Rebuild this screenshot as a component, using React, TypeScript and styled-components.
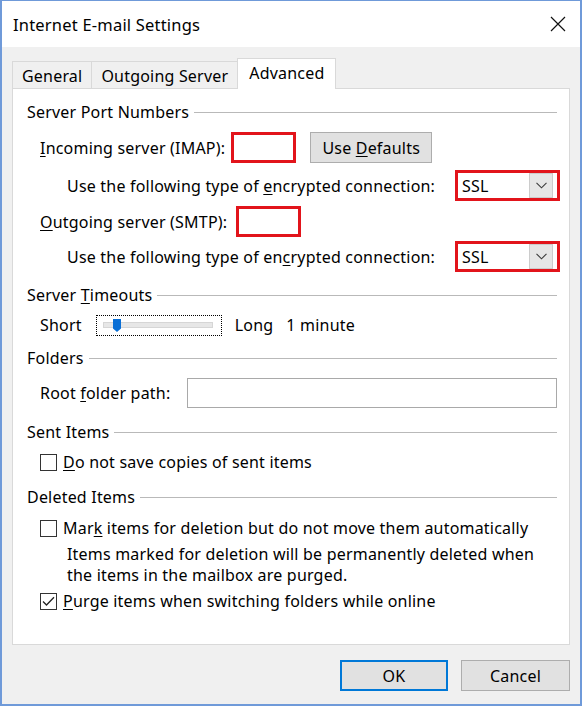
import React from "react";
import styled, { createGlobalStyle, css } from "styled-components";

const GlobalStyle = createGlobalStyle`
  html, body {
    margin: 0;
    padding: 0;
    background: #fff;
  }
  body {
    font-family: "Noto Sans", "Open Sans", sans-serif;
    font-size: 16px;
    letter-spacing: 0.2px;
    color: #000;
  }
  * {
    box-sizing: border-box;
  }
`;

const Window = styled.div`
  width: 582px;
  height: 706px;
  display: flex;
  flex-direction: column;
  border: 2px solid #6f9ad9;
  border-top-width: 1px;
  background: #f0f0f0;
`;

const TitleBar = styled.div`
  flex: none;
  height: 46px;
  display: flex;
  align-items: center;
  justify-content: space-between;
  padding: 0 14px 0 11px;
  background: #fff;
  font-size: 16.5px;
  letter-spacing: 0.2px;
`;

const CloseButton = styled.div`
  display: flex;
  align-items: center;
  justify-content: center;
  width: 16px;
  height: 16px;
`;

const Body = styled.div`
  flex: 1;
  display: flex;
  flex-direction: column;
  padding: 11px 10px 0;
`;

const TabList = styled.div`
  display: flex;
  align-items: flex-end;
  height: 31px;
`;

const Tab = styled.div<{ $active?: boolean }>`
  display: flex;
  align-items: center;
  height: 28px;
  padding: 0 9px;
  margin-right: -1px;
  border: 1px solid #d9d9d9;
  border-bottom: none;
  background: #f0f0f0;
  ${(p) =>
    p.$active &&
    css`
      position: relative;
      z-index: 2;
      height: 31px;
      padding: 0 11px 3px;
      background: #fff;
    `}
`;

const Panel = styled.div`
  position: relative;
  z-index: 1;
  height: 557px;
  margin-top: -1px;
  display: flex;
  flex-direction: column;
  padding: 13px 12px 0 14px;
  background: #fff;
  border: 1px solid #d9d9d9;
`;

const GroupHeader = styled.div<{ $mt?: number }>`
  display: flex;
  align-items: center;
  gap: 5px;
  height: 20px;
  margin-top: ${(p) => p.$mt ?? 0}px;

  &::after {
    content: "";
    flex: 1;
    height: 1px;
    background: #b9b9b9;
  }
`;

const Row = styled.div<{ $indent: number; $mt: number; $h: number }>`
  display: flex;
  align-items: center;
  height: ${(p) => p.$h}px;
  margin-top: ${(p) => p.$mt}px;
  padding-left: ${(p) => p.$indent}px;
  white-space: nowrap;
`;

const Key = styled.span`
  text-decoration: underline;
  text-decoration-thickness: 1px;
  text-underline-offset: 2px;
`;

const RedFrame = styled.div<{ $w: number; $ml?: number }>`
  display: flex;
  align-items: stretch;
  width: ${(p) => p.$w}px;
  height: 31px;
  margin-left: ${(p) => p.$ml ?? 0}px;
  border: 3px solid #e2141b;
  background: #fff;
`;

const ComboFrame = styled(RedFrame)`
  margin-left: auto;
  margin-right: -3px;
`;

const ComboValue = styled.div`
  flex: 1;
  display: flex;
  align-items: center;
  padding-left: 4px;
`;

const ComboArrow = styled.div`
  width: 24px;
  margin-right: 4px;
  display: flex;
  align-items: center;
  justify-content: center;
  background: #e6e6e6;
  border: 1px solid #cccccc;
`;

const Button = styled.button<{ $w: number; $default?: boolean }>`
  width: ${(p) => p.$w}px;
  height: 31px;
  padding: 0;
  font: inherit;
  letter-spacing: inherit;
  color: #000;
  background: #e1e1e1;
  border: 1px solid #adadad;
  ${(p) =>
    p.$default &&
    css`
      border: 2px solid #0078d7;
    `}
`;

const DefaultsButton = styled(Button)`
  margin-left: 14px;
`;

const SliderBox = styled.div`
  position: relative;
  width: 126px;
  height: 21px;
  margin-left: 14px;
  padding: 6px 8px 0 6px;
  border: 1px dotted #000;
`;

const SliderTrack = styled.div`
  position: relative;
  height: 6px;
  background: #e7e7e7;
  border: 1px solid #d6d6d6;
`;

const SliderThumb = styled.svg`
  position: absolute;
  left: 9px;
  top: -4px;
`;

const Spaced = styled.span<{ $ml: number }>`
  margin-left: ${(p) => p.$ml}px;
`;

const TextBox = styled.div`
  width: 370px;
  height: 30px;
  margin-left: auto;
  border: 1px solid #a9a9a9;
  background: #fff;
`;

const CheckBox = styled.div`
  flex: none;
  display: flex;
  align-items: center;
  justify-content: center;
  width: 17px;
  height: 17px;
  margin-right: 6px;
  border: 1px solid #333;
  background: #fff;
`;

const Note = styled.div`
  margin-top: 6px;
  padding-left: 40px;
  line-height: 21px;
`;

const Footer = styled.div`
  display: flex;
  justify-content: flex-end;
  gap: 13px;
  margin-top: 15px;
`;

function Chevron() {
  return (
    <svg width="11" height="7" viewBox="0 0 11 7">
      <polyline points="0.5,0.8 5.5,5.8 10.5,0.8" fill="none" stroke="#3c3c3c" strokeWidth="1.1" />
    </svg>
  );
}

function Combo({ value }: { value: string }) {
  return (
    <ComboFrame $w={105}>
      <ComboValue>{value}</ComboValue>
      <ComboArrow>
        <Chevron />
      </ComboArrow>
    </ComboFrame>
  );
}

function Check({ checked }: { checked?: boolean }) {
  return (
    <CheckBox>
      {checked && (
        <svg width="13" height="11" viewBox="0 0 13 11">
          <polyline points="1,5.5 4.5,9 12,1.2" fill="none" stroke="#222" strokeWidth="1.3" />
        </svg>
      )}
    </CheckBox>
  );
}

export default function App() {
  return (
    <>
      <GlobalStyle />
      <Window>
        <TitleBar>
          <span>Internet E-mail Settings</span>
          <CloseButton>
            <svg width="16" height="16" viewBox="0 0 16 16">
              <path d="M1 1 L15 15 M15 1 L1 15" stroke="#111" strokeWidth="1.2" />
            </svg>
          </CloseButton>
        </TitleBar>

        <Body>
          <TabList>
            <Tab>General</Tab>
            <Tab>Outgoing Server</Tab>
            <Tab $active>Advanced</Tab>
          </TabList>

          <Panel>
            <GroupHeader>Server Port Numbers</GroupHeader>
            <Row $indent={13} $mt={10} $h={31}>
              <span>
                <Key>I</Key>ncoming server (IMAP):
              </span>
              <RedFrame $w={65} $ml={6} />
              <DefaultsButton $w={122}>
                Use <Key>D</Key>efaults
              </DefaultsButton>
            </Row>
            <Row $indent={40} $mt={7} $h={31}>
              <span>
                Use the following type of <Key>e</Key>ncrypted connection:
              </span>
              <Combo value="SSL" />
            </Row>
            <Row $indent={13} $mt={5} $h={31}>
              <span>
                <Key>O</Key>utgoing server (SMTP):
              </span>
              <RedFrame $w={65} $ml={9} />
            </Row>
            <Row $indent={40} $mt={4} $h={31}>
              <span>
                Use the following type of en<Key>c</Key>rypted connection:
              </span>
              <Combo value="SSL" />
            </Row>

            <GroupHeader $mt={13}>
              <span>
                Server <Key>T</Key>imeouts
              </span>
            </GroupHeader>
            <Row $indent={13} $mt={9} $h={22}>
              <span>Short</span>
              <SliderBox>
                <SliderTrack>
                  <SliderThumb width="8" height="13" viewBox="0 0 8 13">
                    <path d="M0 0 H8 V9.5 L4 13 L0 9.5 Z" fill="#0a6fd6" />
                  </SliderThumb>
                </SliderTrack>
              </SliderBox>
              <Spaced $ml={13}>Long</Spaced>
              <Spaced $ml={13}>1 minute</Spaced>
            </Row>

            <GroupHeader $mt={12}>Folders</GroupHeader>
            <Row $indent={13} $mt={10} $h={30}>
              <span>
                Root <Key>f</Key>older path:
              </span>
              <TextBox />
            </Row>

            <GroupHeader $mt={14}>Sent Items</GroupHeader>
            <Row $indent={13} $mt={10} $h={20}>
              <Check />
              <span>
                <Key>D</Key>o not save copies of sent items
              </span>
            </Row>

            <GroupHeader $mt={15}>Deleted Items</GroupHeader>
            <Row $indent={13} $mt={11} $h={20}>
              <Check />
              <span>
                Mar<Key>k</Key> items for deletion but do not move them automatically
              </span>
            </Row>
            <Note>
              Items marked for deletion will be permanently deleted when
              <br />
              the items in the mailbox are purged.
            </Note>
            <Row $indent={13} $mt={5} $h={20}>
              <Check checked />
              <span>
                <Key>P</Key>urge items when switching folders while online
              </span>
            </Row>
          </Panel>

          <Footer>
            <Button $w={108} $default>
              OK
            </Button>
            <Button $w={109}>Cancel</Button>
          </Footer>
        </Body>
      </Window>
    </>
  );
}
